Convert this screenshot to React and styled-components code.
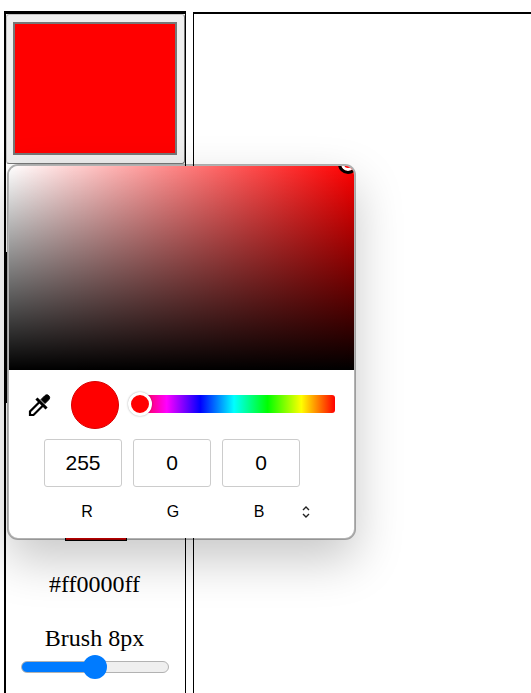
import React from "react";
import styled, { createGlobalStyle } from "styled-components";

const GlobalStyle = createGlobalStyle`
  html, body {
    margin: 0;
    height: 100%;
    overflow: hidden;
    background: #fff;
  }
  body {
    font-family: "Liberation Serif", "Times New Roman", serif;
  }
`;

const Page = styled.div`
  position: relative;
  display: flex;
  align-items: flex-start;
  gap: 7px;
  padding: 11px 0 0 4px;
  height: 693px;
  box-sizing: border-box;
`;

const Sidebar = styled.aside`
  display: flex;
  flex-direction: column;
  align-items: center;
  width: 182px;
  height: 100%;
  box-sizing: border-box;
  border-top: 3px solid #000;
  border-left: 2px solid #000;
  border-right: 1px solid #000;
`;

const Swatch = styled.button`
  display: block;
  flex: none;
  width: 100%;
  height: 150px;
  padding: 7px 7px 8px 6px;
  box-sizing: border-box;
  background: #efefef;
  border: 1px solid;
  border-color: #c4c4c4 #777 #777 #c4c4c4;
  border-radius: 3px;
`;

const SwatchColor = styled.span`
  display: block;
  height: 100%;
  box-sizing: border-box;
  background: #f00;
  border: 2px solid #777;
`;

const Strip = styled.div`
  flex: none;
  align-self: stretch;
  height: 151px;
  margin-top: 88px;
  box-sizing: border-box;
  border-left: 1px solid #000;
`;

const BrushPreview = styled.div`
  flex: none;
  width: 62px;
  height: 62px;
  margin-top: 76px;
  box-sizing: border-box;
  background: #f00;
  border: 1px solid #000;
`;

const Tools = styled.div`
  align-self: flex-start;
  width: 177px;
  display: flex;
  flex-direction: column;
  align-items: center;
`;

const Caption = styled.div`
  font-size: 24px;
  line-height: 28px;
  color: #000;
  text-align: center;
  margin-top: ${(p) => p.$top}px;
`;

const BrushSlider = styled.input`
  appearance: none;
  display: block;
  width: 148px;
  height: 24px;
  margin: 3px 0 0 1px;
  background: transparent;

  &::-webkit-slider-runnable-track {
    height: 12px;
    box-sizing: border-box;
    border: 1px solid #b2b2b2;
    border-radius: 6px;
    background: linear-gradient(to right, #007bff 50%, #efefef 50%);
  }
  &::-webkit-slider-thumb {
    appearance: none;
    width: 24px;
    height: 24px;
    margin-top: -7px;
    border: none;
    border-radius: 50%;
    background: #007bff;
  }
`;

const Canvas = styled.main`
  flex: 1;
  height: 100%;
  margin-top: 1px;
  box-sizing: border-box;
  border-top: 2px solid #000;
  border-left: 1px solid #000;
`;

const Popup = styled.div`
  position: absolute;
  top: 164px;
  left: 7px;
  width: 349px;
  height: 376px;
  box-sizing: border-box;
  display: flex;
  flex-direction: column;
  background: #fff;
  background-clip: padding-box;
  border: 2px solid rgba(0, 0, 0, 0.3);
  border-radius: 11px;
  box-shadow: 0 20px 48px rgba(0, 0, 0, 0.22);
  font-family: "Liberation Sans", Arial, sans-serif;
  color: #000;
`;

const ColorField = styled.div`
  position: relative;
  flex: none;
  height: 204px;
  overflow: hidden;
  border-radius: 9px 9px 0 0;
  background:
    linear-gradient(to bottom, rgba(0, 0, 0, 0), #000),
    linear-gradient(to right, #fff, #f00);
`;

const FieldHandle = styled.span`
  position: absolute;
  top: -12px;
  right: -4px;
  width: 14px;
  height: 14px;
  box-sizing: content-box;
  border: 3px solid #000;
  border-radius: 50%;
  background: #f00;
  box-shadow: inset 0 0 0 3px #fff;
`;

const Controls = styled.div`
  display: flex;
  align-items: center;
  padding: 11px 19px 0 19px;
  height: 48px;
`;

const Dropper = styled.svg`
  flex: none;
  width: 24px;
  height: 24px;
  display: block;
`;

const Preview = styled.div`
  flex: none;
  width: 48px;
  height: 48px;
  margin-left: 19px;
  border-radius: 50%;
  background: #f00;
  box-sizing: border-box;
  border: 1px solid #d80000;
`;

const HueTrack = styled.div`
  position: relative;
  flex: none;
  width: 202px;
  height: 18px;
  margin: 0 0 2px 14px;
  border-radius: 3px;
  background: linear-gradient(
    to right,
    #f00,
    #f0f 16.67%,
    #00f 33.33%,
    #0ff 50%,
    #0f0 66.67%,
    #ff0 83.33%,
    #f00
  );
`;

const HueHandle = styled.span`
  position: absolute;
  top: -3px;
  left: -5px;
  width: 24px;
  height: 24px;
  box-sizing: border-box;
  border: 3px solid #fff;
  border-radius: 50%;
  background: #f00;
  box-shadow: 0 0 2px rgba(0, 0, 0, 0.35);
`;

const Inputs = styled.div`
  display: flex;
  gap: 11px;
  padding: 10px 0 0 35px;
`;

const ChannelInput = styled.div`
  width: 78px;
  height: 48px;
  box-sizing: border-box;
  display: flex;
  align-items: center;
  justify-content: center;
  border: 1px solid #ccc;
  border-radius: 3px;
  font-size: 21px;
`;

const Labels = styled.div`
  display: grid;
  grid-template-columns: repeat(3, 86px) auto;
  align-items: center;
  padding: 16px 0 0 35px;
`;

const ChannelLabel = styled.div`
  font-size: 16px;
  line-height: 18px;
  text-align: center;
`;

const ModeToggle = styled.svg`
  display: block;
  width: 10px;
  height: 14px;
  margin-left: -1px;
`;

const channels = [
  { label: "R", value: 255 },
  { label: "G", value: 0 },
  { label: "B", value: 0 },
];

export default function App() {
  return (
    <>
      <GlobalStyle />
      <Page>
        <Sidebar>
          <Swatch type="button">
            <SwatchColor />
          </Swatch>
          <Strip />
          <BrushPreview />
          <Tools>
            <Caption $top={29}>#ff0000ff</Caption>
            <Caption $top={26}>Brush 8px</Caption>
            <BrushSlider type="range" min="1" max="15" defaultValue="8" />
          </Tools>
        </Sidebar>
        <Canvas />
        <Popup>
          <ColorField>
            <FieldHandle />
          </ColorField>
          <Controls>
            <Dropper viewBox="0 0 24 24">
              <path
                d="M12.5 8 2 18.5V22h3.5L16 11.5"
                fill="#fff"
                stroke="#000"
                strokeWidth="2.2"
              />
              <path d="M9.5 6.5 17.5 14.5" stroke="#000" strokeWidth="3" strokeLinecap="square" />
              <path
                d="M13 6.5 16.5 3c1.5-1.5 3.2-1.5 4.3-.3 1.2 1.1 1.2 2.8-.3 4.3L17 10.5z"
                fill="#000"
                stroke="#000"
              />
            </Dropper>
            <Preview />
            <HueTrack>
              <HueHandle />
            </HueTrack>
          </Controls>
          <Inputs>
            {channels.map((c) => (
              <ChannelInput key={c.label}>{c.value}</ChannelInput>
            ))}
          </Inputs>
          <Labels>
            {channels.map((c) => (
              <ChannelLabel key={c.label}>{c.label}</ChannelLabel>
            ))}
            <ModeToggle viewBox="0 0 10 14">
              <path
                d="M2 5 5 2 8 5M2 9 5 12 8 9"
                fill="none"
                stroke="#222"
                strokeWidth="1.4"
              />
            </ModeToggle>
          </Labels>
        </Popup>
      </Page>
    </>
  );
}
